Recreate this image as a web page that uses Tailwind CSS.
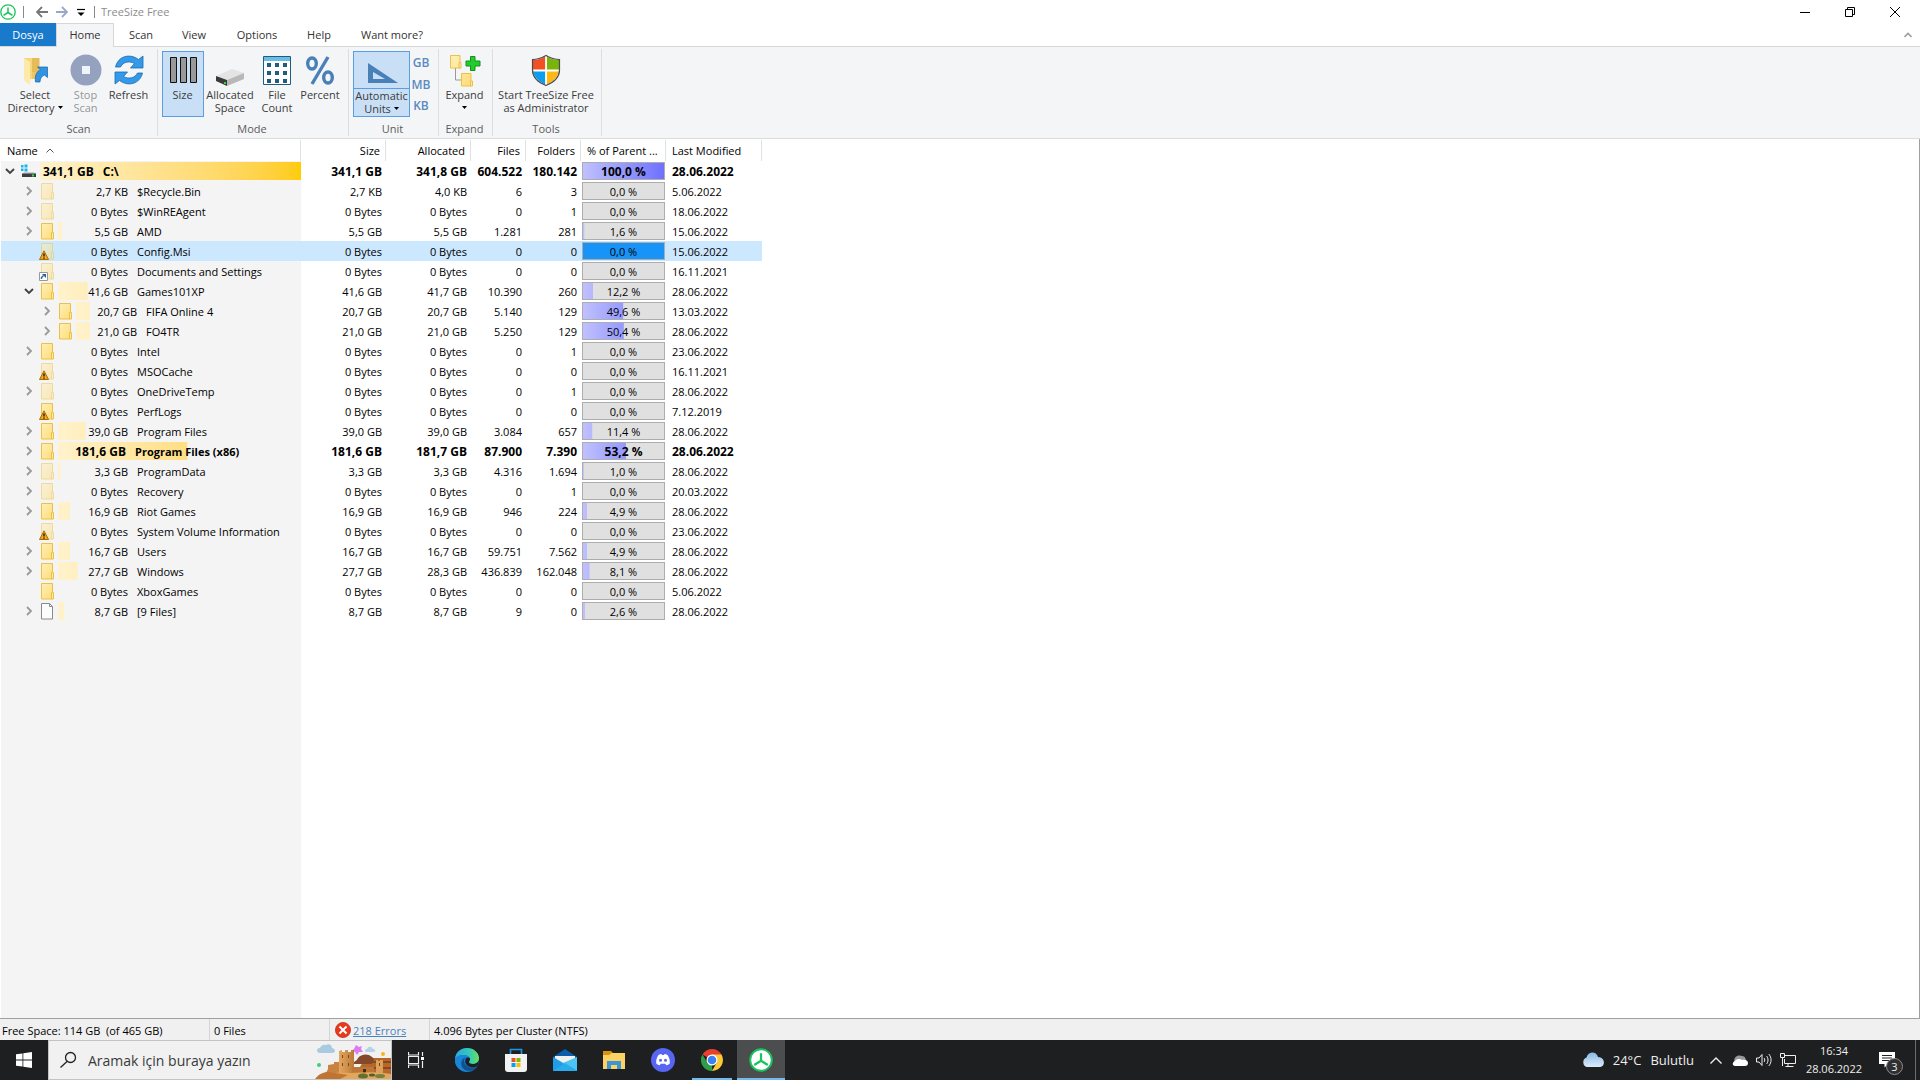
<!DOCTYPE html>
<html lang="tr">
<head>
<meta charset="utf-8">
<title>TreeSize Free</title>
<script src="https://cdn.jsdelivr.net/npm/@tailwindcss/browser@4"></script>
</head>
<body class="flex min-h-screen flex-col bg-white font-['Open_Sans','Noto_Sans',sans-serif] text-[11px] leading-[13px] text-black">

<!-- Shared icons -->
<svg class="absolute size-0" aria-hidden="true">
  <defs>
    <linearGradient id="fold" x1="0" y1="0" x2="1" y2="1"><stop offset="0" stop-color="#fff0b8"/><stop offset="1" stop-color="#ffdc78"/></linearGradient>
    <linearGradient id="tower" x1="0" y1="0" x2="1" y2="0"><stop offset="0" stop-color="#e3a860"/><stop offset="1" stop-color="#bb7a38"/></linearGradient>
    <linearGradient id="sky" x1="0" y1="0" x2="0" y2="1"><stop offset="0" stop-color="#8ab8e8"/><stop offset="1" stop-color="#dcebfa"/></linearGradient>
    <linearGradient id="edgeA" x1="0" y1="0" x2="1" y2="0"><stop offset="0" stop-color="#2aa8e0"/><stop offset=".6" stop-color="#36c9b8"/><stop offset="1" stop-color="#6ae05a"/></linearGradient>
  </defs>
  <symbol id="folder" viewBox="0 0 14 17"><path d="M.5.5h11v15.500h-11z" fill="url(#fold)" stroke="#eac14a"/><path d="M10.500 9.500h2v6.500h-2z" fill="#ffe9a0" stroke="#eac14a"/></symbol>
  <symbol id="file" viewBox="0 0 14 17"><path d="M.5.5h8l3 3V16H.5z" fill="#fbfcfd" stroke="#8a8a8a"/><path d="M8.500.5v3h3" fill="none" stroke="#8a8a8a"/></symbol>
  <symbol id="right" viewBox="0 0 8 10"><path d="M2 1l4 4-4 4" fill="none" stroke="#9a9a9a" stroke-width="1.800"/></symbol>
  <symbol id="down" viewBox="0 0 10 8"><path d="M1 2l4 4 4-4" fill="none" stroke="#404040" stroke-width="1.800"/></symbol>
  <symbol id="warn" viewBox="0 0 10 10"><path d="M5 .8L9.500 9.500h-9z" fill="#f5a81c" stroke="#9a6408" stroke-width=".9"/><path d="M5 3.500v3M5 7.500v1.200" stroke="#1c1200" stroke-width="1.300"/></symbol>
  <symbol id="link" viewBox="0 0 9 9"><path d="M.5.5h8v8h-8z" fill="#fff" stroke="#999"/><path d="M2.500 7V5.500l2-2" fill="none" stroke="#2560a8" stroke-width="1.400"/><path d="M3 2h4v4z" fill="#2560a8"/></symbol>
  <symbol id="tree" viewBox="0 0 16 16"><circle cx="8" cy="8" r="7.200" fill="#fff" stroke="#17c45c" stroke-width="1.300"/><path d="M8 3.500V9M8 8.500L3.500 11.300M8 8.500l4.500 2.800" stroke="#17c45c" stroke-width="1.500" fill="none"/></symbol>
</svg>

<!-- Title bar -->
<header class="flex h-[23px] items-center justify-between">
  <div class="flex h-full items-center">
    <svg class="size-4" viewBox="0 0 16 16"><use href="#tree"/></svg>
    <span class="ml-[7px] h-3 w-px bg-[#8a8a8a]"></span>
    <button class="ml-3 h-3 w-3" aria-label="Back"><svg viewBox="0 0 12 12"><path d="M12 6H1M6 1L1 6l5 5" fill="none" stroke="#777" stroke-width="1.800"/></svg></button>
    <button class="ml-2 h-3 w-3" aria-label="Forward"><svg viewBox="0 0 12 12"><path d="M0 6h11M6 1l5 5-5 5" fill="none" stroke="#99a8c9" stroke-width="1.800"/></svg></button>
    <button class="ml-[9px] h-2 w-2" aria-label="Customize"><svg viewBox="0 0 8 8"><path d="M0 1.500h8" stroke="#000" stroke-width="1.200"/><path d="M.5 4.500h7L4 8z"/></svg></button>
    <span class="ml-[9px] h-3 w-px bg-[#8a8a8a]"></span>
    <h1 class="ml-[6px] text-[#8c8c8c]">TreeSize Free</h1>
  </div>
  <div class="flex gap-[33px] pr-[19px]">
    <button class="size-3" aria-label="Minimize"><svg viewBox="0 0 12 12"><path d="M1 6.500h10" stroke="#000"/></svg></button>
    <button class="size-3" aria-label="Restore"><svg viewBox="0 0 12 12"><path d="M1.500 3.500h7v7h-7zM3.500 3.500v-2h7v7h-2" fill="none" stroke="#000"/></svg></button>
    <button class="size-3" aria-label="Close"><svg viewBox="0 0 12 12"><path d="M1 1l10 10M11 1L1 11" stroke="#000" fill="none"/></svg></button>
  </div>
</header>

<!-- Ribbon tabs -->
<nav class="flex h-6 items-stretch border-b border-[#d5d7d9] text-[#333]">
  <button class="w-14 bg-[#1979ca] text-white">Dosya</button>
  <button class="-mb-px w-[58px] border border-b-0 border-[#d5d7d9] bg-[#f4f5f7] pb-[2px]">Home</button>
  <button class="w-[54px]">Scan</button>
  <button class="w-[52px]">View</button>
  <button class="w-[74px]">Options</button>
  <button class="w-[50px]">Help</button>
  <button class="w-24">Want more?</button>
  <button class="mr-1 ml-auto w-4" aria-label="Collapse ribbon"><svg class="mx-auto w-2" viewBox="0 0 8 6"><path d="M.5 5L4 1.500 7.500 5" fill="none" stroke="#a0a0a0" stroke-width="1.600"/></svg></button>
</nav>

<!-- Ribbon -->
<section class="flex h-[92px] border-b border-[#dadbdd] bg-[#f4f5f7] py-[2px] text-[#3c3c3c]">
  <div class="flex w-[158px] flex-col border-r border-[#dcdee0] pt-[2px]">
    <div class="flex h-[66px] pl-[6px]">
      <button class="flex w-[58px] flex-col items-center pt-px">
        <svg class="h-9 w-8" viewBox="0 0 32 36"><path d="M5 6h15v21H9z" fill="#eec863"/><path d="M12 6h8.500v14H12z" fill="#e6bc58"/><path d="M5 6l6 3.500V33L5 28.500z" fill="#fdeaa8"/><path d="M5 6h8v21h-2V9.500z" fill="#f8d77c"/><path d="M16.500 30c-1-7 1.500-11 5-12l-3-3L28.500 15v10.500l-3-2.500c-3 1-4.500 4-4.500 7z" fill="#2f94e4" stroke="#1a62a4" stroke-width=".7"/></svg>
        <span>Select</span><span class="flex items-center gap-[3px] whitespace-nowrap">Directory<svg class="w-[5px]" viewBox="0 0 5 3"><path d="M0 0h5L2.500 3z"/></svg></span>
      </button>
      <button class="flex w-[43px] flex-col items-center pt-px text-[#949699]" disabled>
        <svg class="h-9 w-8" viewBox="0 0 32 36"><circle cx="16" cy="18" r="15.500" fill="#95a2bf"/><path d="M12 14h8v8h-8z" fill="#eef3fc"/></svg>
        <span>Stop</span><span>Scan</span>
      </button>
      <button class="flex w-[43px] flex-col items-center pt-px">
        <svg class="h-9 w-8" viewBox="0 0 32 36"><g fill="#3399e8" stroke="#1a6cb4" stroke-width=".8"><path d="M2.500 15C5 4 17 1 25.500 7.500L30 4v12H17.500l4-4.500C16 8.500 10 10 7.500 15z"/><path d="M29.500 21C27 32 15 35 6.500 28.500L2 32V20h12.500l-4 4.500c5.500 3 11.500 1.500 14-3.500z"/></g></svg>
        <span>Refresh</span>
      </button>
    </div>
    <h2 class="mt-[5px] text-center text-[#5c5c5c]">Scan</h2>
  </div>

  <div class="flex w-[191px] flex-col border-r border-[#dcdee0] pt-[2px]">
    <div class="flex h-[66px] pl-1">
      <button class="flex w-[42px] flex-col items-center border border-[#5a9de0] bg-[#c9dff6] pr-px">
        <svg class="h-9 w-8" viewBox="0 0 32 36"><path d="M3.500 5.500h6v25h-6zM13.500 5.500h6v25h-6zM23.500 5.500h6v25h-6z" fill="#999" stroke="#111"/></svg>
        <span>Size</span>
      </button>
      <button class="flex w-[52px] flex-col items-center pt-px">
        <svg class="h-9 w-8" viewBox="0 0 32 36"><path d="M2 24l16-7 12 4-17 7z" fill="#e4e4e4"/><path d="M2 24l11 4v6L2 29z" fill="#3a3a3a"/><path d="M13 28l17-7v6l-17 7z" fill="#b8b8b8"/><path d="M10 30h2v2h-2z" fill="#2fd63c"/></svg>
        <span>Allocated</span><span>Space</span>
      </button>
      <button class="flex w-[42px] flex-col items-center pt-px">
        <svg class="h-9 w-8" viewBox="0 0 32 36"><path d="M2.500 4.500h27v28h-27z" fill="#fff" stroke="#1e5c80"/><path d="M3 5h26v4H3z" fill="#6cbce8"/><path d="M6 11h4v4H6zm8 0h4v4h-4zm8 0h4v4h-4zM6 19h4v4H6zm8 0h4v4h-4zm8 0h4v4h-4zM6 27h4v4H6zm8 0h4v4h-4zm8 0h4v4h-4z" fill="#1e5c80"/></svg>
        <span>File</span><span>Count</span>
      </button>
      <button class="flex w-11 flex-col items-center pt-px">
        <svg class="h-9 w-8" viewBox="0 0 32 36"><g fill="none" stroke="#4a80b8" stroke-width="3.400"><ellipse cx="8" cy="11.500" rx="4.300" ry="5.500"/><ellipse cx="24" cy="25.500" rx="4.300" ry="5.500"/><path d="M24 5L8 32"/></g></svg>
        <span>Percent</span>
      </button>
    </div>
    <h2 class="mt-[5px] pr-[2px] text-center text-[#5c5c5c]">Mode</h2>
  </div>

  <div class="flex w-[90px] flex-col border-r border-[#dcdee0] pt-[2px]">
    <div class="flex h-[66px] pl-1">
      <button class="flex w-[57px] flex-col items-center border border-[#5a9de0] bg-[#c9dff6]">
        <svg class="h-9 w-8" viewBox="0 0 32 36"><path d="M2 11v20h30zM7 20l12 7H7z" fill="#4a80b8" fill-rule="evenodd"/></svg>
        <span class="w-full border-t border-[#5a9de0]">Automatic</span><span class="flex items-center gap-[3px]">Units<svg class="w-[5px]" viewBox="0 0 5 3"><path d="M0 0h5L2.500 3z"/></svg></span>
      </button>
      <div class="flex w-[22px] flex-col pt-px text-xs font-semibold text-[#5a8abf]">
        <button class="h-[22px]">GB</button><button class="h-[22px]">MB</button><button class="h-[22px]">KB</button>
      </div>
    </div>
    <h2 class="mt-[5px] pr-[2px] text-center text-[#5c5c5c]">Unit</h2>
  </div>

  <div class="flex w-[54px] flex-col border-r border-[#dcdee0] pt-[2px] pr-[2px]">
    <button class="flex h-[66px] flex-col items-center pt-px">
      <svg class="h-9 w-8" viewBox="0 0 32 36"><path d="M6.500 16v12H12" fill="none" stroke="#999"/><path d="M1.500 3.500h9.500v12.500H1.500zM12.500 21.500H22V34h-9.500z" fill="url(#fold)" stroke="#eac14a"/><path d="M10 10.500h2V16h-2zM21.500 29h2v5h-2z" fill="#ffe9a0" stroke="#eac14a"/><path d="M21.500 4.500h4.500v4.500H31v5h-5v4.500h-4.500V14H17V9h4.500z" fill="#22cc2a" stroke="#169020"/></svg>
      <span>Expand</span><svg class="mt-[5px] w-[5px]" viewBox="0 0 5 3"><path d="M0 0h5L2.500 3z"/></svg>
    </button>
    <h2 class="mt-[5px] text-center text-[#5c5c5c]">Expand</h2>
  </div>

  <div class="flex w-[109px] flex-col border-r border-[#dcdee0] pt-[2px] pr-[2px]">
    <button class="flex h-[66px] flex-col items-center pt-px">
      <svg class="h-9 w-8" viewBox="0 0 32 36"><path d="M3 8c6 0 9-2 13-4v14H3z" fill="#f05023"/><path d="M29 8c-6 0-9-2-13-4v14h13z" fill="#79b30c"/><path d="M3 19h13v14C8 29 4 25 3 19z" fill="#0a9df0"/><path d="M29 19H16v14c8-4 12-8 13-14z" fill="#fdb813"/><path d="M16 4v29M3 18.500h26" stroke="#fff" stroke-width="1.800"/><path d="M2.500 7.500c6 0 10-2 13.500-4 3.500 2 7.500 4 13.500 4V18c0 7-6 12.500-13.500 15.500C8.500 30.500 2.500 25 2.500 18z" fill="none" stroke="#4a4a4a" stroke-width="1.200"/></svg>
      <span class="whitespace-nowrap">Start TreeSize Free</span><span>as Administrator</span>
    </button>
    <h2 class="mt-[5px] text-center text-[#5c5c5c]">Tools</h2>
  </div>
</section>

<!-- Directory table -->
<main class="flex flex-1 flex-col border-r border-[#a0a0a0] pt-px pl-px">
  <table class="w-[761px] table-fixed border-separate border-spacing-0">
    <colgroup><col class="w-[300px]"><col class="w-[85px]"><col class="w-[85px]"><col class="w-[55px]"><col class="w-[55px]"><col class="w-[85px]"><col class="w-24"></colgroup>
    <thead>
      <tr class="h-[21px] [&>th]:border-r [&>th]:border-[#dfe1e3] [&>th]:p-0 [&>th]:font-normal [&>th]:whitespace-nowrap">
        <th class="text-left"><span class="flex items-center gap-2 pl-[6px]">Name <svg class="w-2" viewBox="0 0 8 5"><path d="M.5 4.500L4 1l3.500 3.500" fill="none" stroke="#555"/></svg></span></th>
        <th class="text-right"><span class="pr-[5px]">Size</span></th>
        <th class="text-right"><span class="pr-[5px]">Allocated</span></th>
        <th class="text-right"><span class="pr-[5px]">Files</span></th>
        <th class="text-right"><span class="pr-[5px]">Folders</span></th>
        <th class="text-left"><span class="pl-[6px]">% of Parent ...</span></th>
        <th class="text-left"><span class="pl-[6px]">Last Modified</span></th>
      </tr>
    </thead>
    <tbody id="rows"></tbody>
  </table>
  <div class="w-[300px] flex-1 bg-[#f4f4f4]"></div>
</main>

<!-- Status bar -->
<footer class="flex h-[22px] items-stretch border-t border-[#a0a0a0] bg-[#f0f0f0] [&>div]:flex [&>div]:items-center [&>div]:pt-px">
  <div class="w-[210px] border-r border-[#d5d5d5] pl-[2px] whitespace-pre">Free Space: 114 GB  (of 465 GB)</div>
  <div class="w-[120px] border-r border-[#d5d5d5] pl-1">0 Files</div>
  <div class="w-[100px] gap-[2px] border-r border-[#d5d5d5] pl-[5px]">
    <svg class="size-4" viewBox="0 0 16 16"><circle cx="8" cy="8" r="7.600" fill="#e8391f" stroke="#b82a14" stroke-width=".7"/><path d="M4.500 4.500l7 7M11.500 4.500l-7 7" stroke="#fff" stroke-width="2"/></svg>
    <a href="#errors" class="text-[#4a82bd] underline">218 Errors</a>
  </div>
  <div class="pl-1">4.096 Bytes per Cluster (NTFS)</div>
</footer>

<!-- Taskbar -->
<nav class="flex h-10 items-stretch bg-[#1e1f21] text-[#eee]">
  <button class="flex w-12 items-center justify-center" aria-label="Start"><svg class="size-4" viewBox="0 0 16 16"><path d="M0 2.300l6.500-.9v6.200H0zM7.300 1.300L16 0v7.600H7.300zM0 8.400h6.500v6.200L0 13.700zM7.300 8.400H16V16l-8.700-1.300z" fill="#fff"/></svg></button>
  <label class="flex w-[344px] items-center border border-[#c4c4c4] bg-[#f1f1f1]">
    <svg class="ml-[10px] size-[18px] shrink-0" viewBox="0 0 18 18"><circle cx="11.500" cy="6.500" r="5" fill="none" stroke="#222" stroke-width="1.300"/><path d="M8 10.500L1.500 16.500" stroke="#222" stroke-width="1.300"/></svg>
    <input type="text" aria-label="Ara" placeholder="Aramak için buraya yazın" class="ml-[11px] min-w-0 flex-1 bg-transparent pt-px text-[14px] leading-5 outline-none placeholder:text-[#3a3a3a]">
    <svg class="h-[38px] w-[76px] shrink-0" viewBox="0 0 76 38">
      <path d="M5 12c-4 0-4-5 0-5 1-3 4-4 6-3 3-2 6 0 6 3 4 1 4 5 0 5z" fill="#a9cbdf"/><path d="M51 11c-2-1-1-3 1-3 1-3 5-3 6 0 3 0 3 3 0 3z" fill="#b3d3e6"/>
      <path d="M41 4l3 2 3-1-1 3 2 3-4 0-2 3-2-3-4-1 3-2z" fill="#dc7bf2"/><circle cx="68" cy="13" r="2" fill="#fbb612"/><circle cx="4" cy="24" r="2" fill="#44cf74"/>
      <path d="M50 17h26v18H40z" fill="#b4682c"/><path d="M54 20h22v2H54zM58 26h18v2H58z" fill="#8a481c"/>
      <path d="M38 23c1-3 4-3 5-6 3-4 10-5 14-1 3 2 2 6-1 7z" fill="#84492a"/>
      <path d="M2 38c3-4 5-5 9-6l2-4 0-4 6-1v-2h6v17z" fill="#c98240"/>
      <path d="M24 10l3-1v2l3 0V9h3v2h3V9l3 0v27H24z" fill="url(#tower)"/>
      <path d="M27 14h1v3h-1zM33 14h1v3h-1zM27 22h1v3h-1zM33 22h1v3h-1z" fill="#7a4618"/>
      <path d="M61 19l2 0v1h2v-1h3v15h-7z" fill="#dca058"/><path d="M37 26h22v9H37z" fill="#bc7636"/><path d="M48 28h3v4h-3z" fill="#4a2810"/><path d="M64 22h1v3h-1z" fill="#70411a"/>
      <path d="M0 38c10-6 22-7 36-6 14-1 28-1 40 1v5z" fill="#e2a65c"/><path d="M0 38c4-5 8-7 13-7l20 3-8 4z" fill="#c07434"/><ellipse cx="48" cy="35" rx="5" ry="2.500" fill="#66702e"/><ellipse cx="65" cy="35" rx="5" ry="2" fill="#77803a"/><ellipse cx="57" cy="34" rx="3" ry="1.500" fill="#525f28"/>
    </svg>
  </label>
  <div class="flex items-stretch [&>button]:flex [&>button]:items-center [&>button]:justify-center">
    <button class="w-12" aria-label="Task view"><svg class="size-4" viewBox="0 0 16 16"><path d="M.5 0v3h10V0M.5 16v-3h10V16M.5 4.500h10v7H.5zM14.500 0v4M14.500 9v7" fill="none" stroke="#eee" stroke-width="1.200"/><path d="M13 5h3v3h-3z" fill="#fff"/></svg></button>
    <button class="ml-[2px] w-[49px]" aria-label="Edge"><svg class="size-6" viewBox="0 0 24 24"><circle cx="12" cy="12" r="12" fill="#1478cc"/><path d="M0 12C0 4 6 0 12 0c7 0 12 5 12 10 0 4-3 6-6 6s-4-1-4-2 1-1.500 1-3-2-4-6-4c-5 0-9 2-9 5z" fill="url(#edgeA)"/><path d="M8 10c-2 1-3 4-2 7 1 4 5 7 9 6.500C7 25 0 19 0 13c0-4 4-6 9-6 3 0 5 1.500 5.500 3-1-1-4-1.500-6.500 0z" fill="#1b86d8"/><path d="M10 9.500c-3 5 1 10 6.500 10 2.500 0 4.500-.5 6-1.500-5 8-15 5-16-1-.5-3 1-6 3.500-7.500z" fill="#12508c"/><path d="M14 14c0 1 1 2 4 2 2.500 0 5-1.500 6-4-.2 2.500-.8 4.500-1.800 6.300-4 1.700-10 1.200-11.700-3.300-.8-2.500.5-5.500 2.500-5.500 1.500 0 2 1 2 1.500 0 1.500-1 2-1 3z" fill="#1e1f21"/></svg></button>
    <button class="w-[49px]" aria-label="Store"><svg class="size-6" viewBox="0 0 24 24"><path d="M6.500 6V1.500h11V6" fill="none" stroke="#1b96e8" stroke-width="1.600"/><path d="M1 6h22v15a3 3 0 0 1-3 3H4a3 3 0 0 1-3-3z" fill="#f2f2f2"/><path d="M7.500 10h4v4h-4z" fill="#f25022"/><path d="M12.500 10h4v4h-4z" fill="#7fba00"/><path d="M7.500 15h4v4h-4z" fill="#00a4ef"/><path d="M12.500 15h4v4h-4z" fill="#ffb900"/></svg></button>
    <button class="w-[49px]" aria-label="Mail"><svg class="size-6" viewBox="0 0 24 24"><path d="M0 9l12-8 12 8v7H0z" fill="#0b5cab"/><path d="M2 8h20v7l-10 2L2 13z" fill="#f0f0f0"/><path d="M0 9l24 14H0z" fill="#1e9ee8"/><path d="M24 9L10 15l14 8z" fill="#4cc4f5"/><path d="M0 23L12 15l12 8z" fill="#2aabec"/></svg></button>
    <button class="w-[49px]" aria-label="File Explorer"><svg class="size-6" viewBox="0 0 24 24"><path d="M1 3h8l2 2h12v5H1z" fill="#d9930f"/><path d="M1 7h6l3-2h13v16H1z" fill="#fbd264"/><path d="M5 21v-8h14v8h-4v-4H9v4z" fill="#3d94d8"/></svg></button>
    <button class="w-[49px]" aria-label="Discord"><svg class="size-6" viewBox="0 0 24 24"><circle cx="12" cy="12" r="12" fill="#5865f2"/><path d="M7.500 7c1-.6 2-.8 3-1l.5 1h2l.5-1c1 .2 2 .4 3 1 1.800 2.500 2.600 5.500 2.300 8.500-1.200 1-2.300 1.500-3.500 1.800l-1-1.600h-4.600l-1 1.600c-1.200-.3-2.300-.8-3.500-1.800C4.900 12.500 5.700 9.500 7.500 7z" fill="#fff"/><circle cx="9.500" cy="12.300" r="1.500" fill="#5865f2"/><circle cx="14.500" cy="12.300" r="1.500" fill="#5865f2"/></svg></button>
    <button class="mx-[5px] w-10 border-b-2 border-[#76b9ed] pt-[2px]" aria-label="Chrome"><svg class="size-[22px]" viewBox="0 0 22 22"><path d="M11 11L1.500 5.500A11 11 0 0 1 20.500 5.500z" fill="#e8402f"/><path d="M1.500 5.500L6.500 14l4.500 2.500L11.500 22A11 11 0 0 1 1.500 5.500z" fill="#2f9e48"/><path d="M15.500 14L11 22a11 11 0 0 0 9.500-16.500H11z" fill="#fcc934"/><circle cx="11" cy="11" r="5.500" fill="#fff"/><circle cx="11" cy="11" r="4.300" fill="#3b82ee"/></svg></button>
    <button class="w-12 border-b-2 border-[#76b9ed] bg-[#4c4d4f] pt-[2px]" aria-label="TreeSize Free"><svg class="size-6" viewBox="0 0 16 16"><use href="#tree"/></svg></button>
  </div>
  <div class="ml-auto flex items-center">
    <button class="flex items-center text-[13px]">
      <svg class="h-4 w-[22px]" viewBox="0 0 22 16"><path d="M5 15a5 5 0 0 1-.5-9.500C6-.5 14-1.500 16 5c7 0 8 9 2 10z" fill="url(#sky)"/></svg>
      <span class="ml-[9px] pt-px">24°C</span><span class="ml-[9px] pt-px">Bulutlu</span>
    </button>
    <button class="ml-4 w-3" aria-label="Show hidden icons"><svg viewBox="0 0 12 7"><path d="M.5 6.500L6 1l5.500 5.500" fill="none" stroke="#eee" stroke-width="1.400"/></svg></button>
    <button class="ml-[10px] w-4" aria-label="OneDrive"><svg viewBox="0 0 16 11"><path d="M3 8C0 3 6-1 10 1c3 0 4 3 4 5z" fill="#999"/><path d="M3 11c-3 0-3-4 0-5 2-3 6-2 7-1 4-1 6 1 6 3s-1 3-3 3z" fill="#fff"/></svg></button>
    <button class="ml-2 w-4" aria-label="Volume"><svg viewBox="0 0 16 14"><path d="M.5 5h2.500l3-3.500v11L3 9H.500zM8 5c1 1 1 3 0 4M10.500 3c2 2 2 6 0 8M12.800 1c3 3.500 3 8.500 0 12" fill="none" stroke="#eee"/></svg></button>
    <button class="ml-2 w-4" aria-label="Network"><svg viewBox="0 0 16 14"><path d="M4 2.500h11.500v8H4.500V6M8 10.500V13M5.500 13.500h8M.5.500h4v4h-4zM2.500 4.500V13" fill="none" stroke="#eee"/></svg></button>
    <time class="ml-[10px] flex flex-col items-center gap-[5px] pb-px"><span>16:34</span><span>28.06.2022</span></time>
    <button class="relative ml-[17px] h-4 w-4" aria-label="Notifications">
      <svg class="size-4" viewBox="0 0 16 16"><path d="M0 0h16v12H9l-3.500 3.500V12H0z" fill="#fff"/><path d="M3 3.500h10M3 6h10M3 8.500h7" stroke="#222"/></svg>
      <span class="absolute top-[6px] left-[7px] flex size-[17px] items-center justify-center rounded-full border border-[#8c8c8c] bg-[#303032] text-[11px]">3</span>
    </button>
    <span class="ml-5 h-10 w-px bg-[#6c6c6e]"></span><span class="w-1"></span>
  </div>
</nav>

<script>
// level, name, size, allocated, files, folders, % of parent, date, bar share of the drive, icon, expander, badge
const data = [
  [0,'C:\\','341,1 GB','341,8 GB','604.522','180.142','100,0','28.06.2022',100,'drive','down',''],
  [1,'$Recycle.Bin','2,7 KB','4,0 KB','6','3','0,0','5.06.2022',0,'dim','right',''],
  [1,'$WinREAgent','0 Bytes','0 Bytes','0','1','0,0','18.06.2022',0,'dim','right',''],
  [1,'AMD','5,5 GB','5,5 GB','1.281','281','1,6','15.06.2022',1.6,'folder','right',''],
  [1,'Config.Msi','0 Bytes','0 Bytes','0','0','0,0','15.06.2022',0,'dim','','warn'],
  [1,'Documents and Settings','0 Bytes','0 Bytes','0','0','0,0','16.11.2021',0,'dim','','link'],
  [1,'Games101XP','41,6 GB','41,7 GB','10.390','260','12,2','28.06.2022',12.2,'folder','down',''],
  [2,'FIFA Online 4','20,7 GB','20,7 GB','5.140','129','49,6','13.03.2022',6.1,'folder','right',''],
  [2,'FO4TR','21,0 GB','21,0 GB','5.250','129','50,4','28.06.2022',6.2,'folder','right',''],
  [1,'Intel','0 Bytes','0 Bytes','0','1','0,0','23.06.2022',0,'folder','right',''],
  [1,'MSOCache','0 Bytes','0 Bytes','0','0','0,0','16.11.2021',0,'dim','','warn'],
  [1,'OneDriveTemp','0 Bytes','0 Bytes','0','1','0,0','28.06.2022',0,'dim','right',''],
  [1,'PerfLogs','0 Bytes','0 Bytes','0','0','0,0','7.12.2019',0,'folder','','warn'],
  [1,'Program Files','39,0 GB','39,0 GB','3.084','657','11,4','28.06.2022',11.4,'folder','right',''],
  [1,'Program Files (x86)','181,6 GB','181,7 GB','87.900','7.390','53,2','28.06.2022',53.2,'folder','right',''],
  [1,'ProgramData','3,3 GB','3,3 GB','4.316','1.694','1,0','28.06.2022',1,'dim','right',''],
  [1,'Recovery','0 Bytes','0 Bytes','0','1','0,0','20.03.2022',0,'dim','right',''],
  [1,'Riot Games','16,9 GB','16,9 GB','946','224','4,9','28.06.2022',4.9,'folder','right',''],
  [1,'System Volume Information','0 Bytes','0 Bytes','0','0','0,0','23.06.2022',0,'dim','','warn'],
  [1,'Users','16,7 GB','16,7 GB','59.751','7.562','4,9','28.06.2022',4.9,'folder','right',''],
  [1,'Windows','27,7 GB','28,3 GB','436.839','162.048','8,1','28.06.2022',8.1,'folder','right',''],
  [1,'XboxGames','0 Bytes','0 Bytes','0','0','0,0','5.06.2022',0,'folder','',''],
  [1,'[9 Files]','8,7 GB','8,7 GB','9','0','2,6','28.06.2022',2.6,'file','right','']
];
const driveIcon = '<svg class="ml-[6px] h-4 w-4 shrink-0" viewBox="0 0 16 16"><path d="M0 2h2.500v2.500H0zM3.500 1.500h3v3h-3zM0 5.500h2.500V8H0zM3.500 5.500h3v3h-3z" fill="#18b4f0"/><path d="M3 9h10l2 2H1.500z" fill="#c9ccd0"/><path d="M1 10.500h14V14H1z" fill="#3b3d40"/><path d="M11 11.500h2v2h-2z" fill="#35e04a"/></svg>';
const pad = ['pl-1', 'pl-[23px]', 'pl-[41px]'];
const sizeW = ['', 'w-[70px]', 'w-[61px]'];
document.getElementById('rows').innerHTML = data.map(r => {
  const [lv, name, size, alloc, files, folders, pct, date, share, icon, exp, badge] = r;
  const bold = share > 50, sel = name === 'Config.Msi';
  const chev = exp ? `<button class="flex w-[10px] shrink-0 justify-center" aria-label="Toggle ${name}"><svg class="${exp === 'down' ? 'h-2 w-[10px]' : 'h-[10px] w-2'}" viewBox="0 0 ${exp === 'down' ? '10 8' : '8 10'}"><use href="#${exp}"/></svg></button>` : '<span class="w-[10px] shrink-0"></span>';
  const ic = icon === 'drive' ? driveIcon :
    `<span class="relative ml-[7px] h-[17px] w-[14px] shrink-0"><svg class="h-[17px] w-[14px] ${icon === 'dim' ? 'opacity-50' : ''}" viewBox="0 0 14 17"><use href="#${icon === 'file' ? 'file' : 'folder'}"/></svg>${badge ? `<svg class="absolute -left-[2px] ${badge === 'warn' ? 'bottom-0 size-[10px]' : '-bottom-px size-[9px]'}" viewBox="${badge === 'warn' ? '0 0 10 10' : '0 0 9 9'}"><use href="#${badge}"/></svg>` : ''}</span>`;
  const label = lv === 0
    ? `<span class="relative pl-[3px]">${size}</span><span class="relative pl-[9px]">${name}</span>`
    : `<span class="relative shrink-0 text-right ${bold ? 'w-[68px]' : sizeW[lv]}">${size}</span><span class="relative pl-[9px] text-[11px]">${name}</span>`;
  // The gradient spans the whole cell; clipping reveals the part this folder takes up.
  const bar = `<span class="absolute inset-0 bg-linear-to-r from-[#fff2cc] to-[#ffcc00]" style="clip-path: inset(0 ${100 - share}% 0 0)"></span>`;
  const p = parseFloat(pct.replace(',', '.'));
  return `<tr class="h-5 ${bold ? 'text-xs leading-[13px] font-bold' : ''} ${sel ? 'bg-[#cce8ff]' : ''} [&>td]:p-0 [&>td]:whitespace-nowrap">
    <td class="${sel ? '' : 'bg-[#f4f4f4]'}"><div class="flex h-5 items-center ${pad[lv]}">${chev}${ic}<div class="relative ml-[3px] flex h-[18px] flex-1 items-center">${bar}${label}</div></div></td>
    <td class="text-right"><span class="pr-1">${size}</span></td><td class="text-right"><span class="pr-1">${alloc}</span></td>
    <td class="text-right"><span class="pr-1">${files}</span></td><td class="text-right"><span class="pr-1">${folders}</span></td>
    <td><div class="relative mr-px ml-px flex h-[18px] items-center justify-center border border-[#adadad] ${sel ? 'bg-[#1893f8]' : 'bg-[#e0e0e0]'}"><span class="absolute inset-0 bg-linear-to-r from-[#c0c0ff] to-[#7070ff]" style="clip-path: inset(0 ${100 - p}% 0 0)"></span><span class="relative">${pct} %</span></div></td>
    <td><span class="pl-[6px]">${date}</span></td></tr>`;
}).join('');
</script>
</body>
</html>
